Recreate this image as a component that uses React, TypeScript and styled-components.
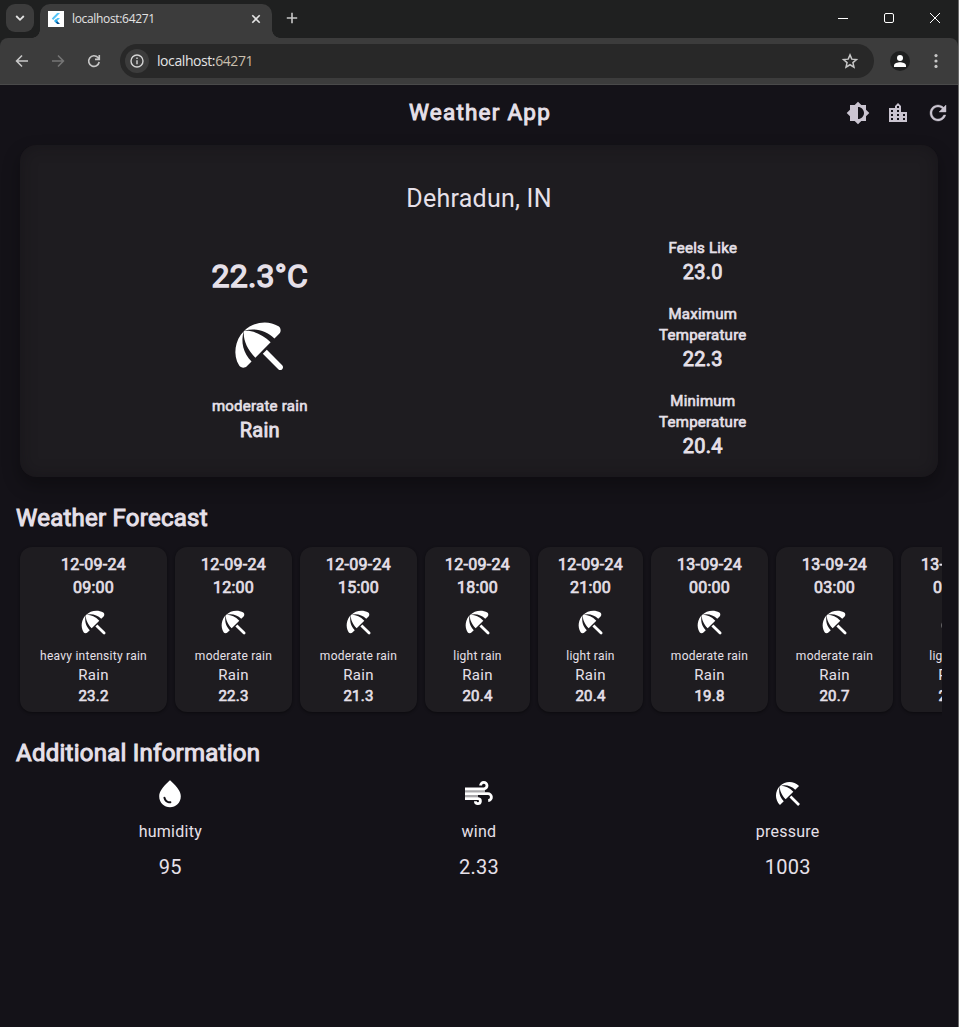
import React from "react";
import styled, { createGlobalStyle } from "styled-components";
import { MdBrightness6, MdLocationCity, MdBeachAccess } from "react-icons/md";

const Global = createGlobalStyle`
  * { box-sizing: border-box; }
  html, body { margin: 0; padding: 0; background: #141218; }
  body { overflow: hidden; }
`;

const Window = styled.div`
  width: 959px;
  height: 1027px;
  display: flex;
  flex-direction: column;
  overflow: hidden;
  background: #141218;
  border-right: 1px solid #6b6b6b;
  color: #e6e0e9;
  font-family: Roboto, sans-serif;
  letter-spacing: 0.25px;
`;

/* Browser chrome */
const TabStrip = styled.div`
  height: 38px;
  flex: none;
  display: flex;
  background: #1f2020;
  font-family: "Open Sans", sans-serif;
`;
const TabSearch = styled.div`
  width: 28px;
  height: 28px;
  margin: 4px 6px 0 6px;
  border-radius: 9px;
  background: #3c3c3c;
  display: grid;
  place-items: center;
`;
const Tab = styled.div`
  position: relative;
  width: 232px;
  height: 34px;
  margin-top: 4px;
  padding: 0 10px 5px 8px;
  display: flex;
  align-items: center;
  background: #3c3c3c;
  border-radius: 10px 10px 0 0;
  &::before,
  &::after {
    content: "";
    position: absolute;
    bottom: 0;
    width: 8px;
    height: 8px;
  }
  &::before {
    left: -8px;
    background: radial-gradient(circle at 0 0, #1f2020 7.5px, #3c3c3c 8px);
  }
  &::after {
    right: -8px;
    background: radial-gradient(circle at 100% 0, #1f2020 7.5px, #3c3c3c 8px);
  }
`;
const TabTitle = styled.span`
  flex: 1;
  margin-left: 8px;
  font-size: 12px;
  letter-spacing: -0.33px;
  color: #e3e3e3;
`;
const NewTab = styled.div`
  width: 40px;
  height: 36px;
  display: grid;
  place-items: center;
`;
const WindowButtons = styled.div`
  margin-left: auto;
  display: flex;
  height: 36px;
`;
const WindowButton = styled.div`
  width: 46px;
  display: grid;
  place-items: center;
`;
const ToolbarWrap = styled.div`
  background: #1f2020;
  height: 47px;
  flex: none;
`;
const Toolbar = styled.div`
  height: 47px;
  display: flex;
  align-items: center;
  padding: 0 4px 1px;
  background: #3c3c3c;
  border-bottom: 1px solid #4a4a4a;
  border-radius: 8px 8px 0 0;
`;
const ToolButton = styled.div`
  width: 36px;
  height: 36px;
  display: grid;
  place-items: center;
`;
const AddressBar = styled.div`
  flex: 1;
  height: 34px;
  margin: 0 8px;
  padding: 0 15px 0 5px;
  display: flex;
  align-items: center;
  background: #282828;
  border-radius: 17px;
`;
const SiteInfo = styled.div`
  width: 24px;
  height: 24px;
  border-radius: 12px;
  background: #3c3c3c;
  display: grid;
  place-items: center;
`;
const Url = styled.span`
  flex: 1;
  margin-left: 8px;
  font: 14px "Open Sans", sans-serif;
  letter-spacing: -0.42px;
  color: #e3e3e3;
`;
const Port = styled.span`
  color: #cabfac;
`;
const Avatar = styled.div`
  width: 20px;
  height: 20px;
  border-radius: 10px;
  background: #1f2020;
`;

/* App */
type TextProps = { $size: number; $line?: number; $ls?: number; $top?: number };
const Plain = styled.div<TextProps>`
  margin-top: ${(p) => p.$top ?? 0}px;
  font-size: ${(p) => p.$size}px;
  line-height: ${(p) => p.$line ?? p.$size * 1.43}px;
  letter-spacing: ${(p) => p.$ls ?? 0.25}px;
  white-space: nowrap;
`;
const Bold = styled(Plain)`
  -webkit-text-stroke: ${(p) => p.$size * 0.042}px currentColor;
`;
const AppBar = styled.header`
  height: 56px;
  flex: none;
  display: grid;
  grid-template-columns: 1fr auto 1fr;
  align-items: center;
`;
const Actions = styled.div`
  grid-column: 3;
  display: flex;
  justify-content: flex-end;
  color: #cac4d0;
`;
const Action = styled.div`
  width: 40px;
  height: 40px;
  display: grid;
  place-items: center;
`;
const Title = styled(Bold)`
  grid-column: 2;
  padding: 0 0 1px 2px;
`;
const CurrentCard = styled.section`
  height: 332px;
  flex: none;
  margin: 4px 20px 0;
  padding: 35.5px 16px 0;
  border-radius: 16px;
  background: #1e1c20;
  box-shadow: inset 0 0 16px rgba(15, 13, 18, 0.4), 0 8px 16px 2px rgba(0, 0, 0, 0.26);
  text-align: center;
`;
const CurrentBody = styled.div`
  display: flex;
  justify-content: space-around;
  margin-top: 22px;
`;
const Summary = styled.div`
  display: flex;
  flex-direction: column;
  align-items: center;
  padding-top: 16px;
`;
const Stats = styled.div`
  display: flex;
  flex-direction: column;
  gap: 18px;
`;
const IconSlot = styled.div<{ $top: number; $bottom: number }>`
  display: flex;
  justify-content: center;
  color: #fff;
  margin: ${(p) => p.$top}px 0 ${(p) => p.$bottom}px;
`;
const Heading = styled(Bold)`
  margin-left: 16px;
  flex: none;
`;
const ForecastRow = styled.div`
  display: flex;
  gap: 8px;
  margin: 10px 16px 0;
  padding: 2px 4px 5px;
  flex: none;
  overflow: hidden;
`;
const ForecastCard = styled.article<{ $width: number }>`
  flex: none;
  width: ${(p) => p.$width}px;
  height: 165px;
  padding-top: 6px;
  border-radius: 12px;
  background: #1e1c20;
  box-shadow: 0 1px 3px rgba(0, 0, 0, 0.45);
  text-align: center;
`;
const InfoRow = styled.div`
  display: grid;
  grid-template-columns: repeat(3, 1fr);
  margin: 0 16px;
  text-align: center;
`;

const Umbrella = ({ size }: { size: number }) => (
  <svg width={size} height={size} viewBox="0 0 24 24" fill="currentColor">
    <path d="M13.05 14.55l1.5-1.5 5.78 5.78c.41.41.41 1.06 0 1.47-.42.42-1.07.42-1.48 0z" />
    <path d="M17.42 8.83l1.78-1.78c.8-.8.7-2.2-.25-2.85C14.9 1.7 9.4 2.6 6.05 5.92c3.9-1.25 8.24-.22 11.37 2.91z" />
    <path d="M8.83 17.42L7.05 19.2c-.8.8-2.2.7-2.85-.25C1.7 14.9 2.6 9.4 5.92 6.05c-1.25 3.9-.22 8.24 2.91 11.37z" />
    <path d="M5.97 5.96l-.01.01c-.38 3.01 1.17 6.88 4.3 10.02l5.73-5.73c-3.13-3.13-7.01-4.68-10.02-4.3z" />
  </svg>
);

const Refresh = () => (
  <svg width="24" height="24" viewBox="0 0 24 24" fill="currentColor" stroke="currentColor" strokeWidth="0.4">
    <path d="M17.65 6.35C16.2 4.9 14.21 4 12 4c-4.42 0-7.99 3.58-7.99 8s3.57 8 7.99 8c3.73 0 6.84-2.55 7.73-6h-2.08c-.82 2.33-3.04 4-5.65 4-3.31 0-6-2.69-6-6s2.69-6 6-6c1.66 0 3.14.69 4.22 1.78L13 11h7V4l-2.35 2.35z" />
  </svg>
);

const Drop = () => (
  <svg width="32" height="32" viewBox="0 0 24 24" fill="currentColor" fillRule="evenodd">
    <path d="M12.66 2.3c-.38-.45-.95-.45-1.33 0C6.45 6.78 3.9 10.5 3.9 13.7 3.9 18.7 7.8 22 12 22s8.1-3.3 8.1-8.3c0-3.2-2.55-6.92-7.44-11.4zM7.83 14c.37 0 .67.26.74.62.41 2.22 2.28 2.98 3.64 2.87.43-.02.79.32.79.75 0 .4-.32.73-.72.75-2.13.13-4.62-1.09-5.19-4.12a.75.75 0 0 1 .74-.87z" />
  </svg>
);

const Wind = () => (
  <svg width="32" height="32" viewBox="0 0 32 32" fill="none" stroke="#fff" strokeWidth="2.8">
    <path d="M2 13h20M2 18.2h13" stroke="#a9a8ab" strokeWidth="3" />
    <path d="M2 10.8h19a3.2 3.2 0 1 0-3.4-3.2" />
    <path d="M2 15.7h22.6a3.4 3.4 0 0 1 .6 7" />
    <path d="M2 20.7h13.2a2.5 2.5 0 1 1-2.8 2.5" />
  </svg>
);

const FlutterLogo = () => (
  <svg width="16" height="16" viewBox="0 0 16 16">
    <rect width="16" height="16" fill="#fff" />
    <path d="M9.2 2H12L5.2 9 3.8 7.5z" fill="#54c5f8" />
    <path d="M9.2 7H12L9.2 10 6.5 10z" fill="#54c5f8" />
    <path d="M6.3 10l1.5-1.5L12 13H9.2z" fill="#01579b" />
    <path d="M6.3 10l1.5-1.5L9.3 10 7.8 11.5z" fill="#29b6f6" />
  </svg>
);

type Forecast = { date: string; time: string; detail: string; temp: string; width: number };
const forecasts: Forecast[] = [
  { date: "12-09-24", time: "09:00", detail: "heavy intensity rain", temp: "23.2", width: 147 },
  { date: "12-09-24", time: "12:00", detail: "moderate rain", temp: "22.3", width: 117 },
  { date: "12-09-24", time: "15:00", detail: "moderate rain", temp: "21.3", width: 117 },
  { date: "12-09-24", time: "18:00", detail: "light rain", temp: "20.4", width: 105 },
  { date: "12-09-24", time: "21:00", detail: "light rain", temp: "20.4", width: 105 },
  { date: "13-09-24", time: "00:00", detail: "moderate rain", temp: "19.8", width: 117 },
  { date: "13-09-24", time: "03:00", detail: "moderate rain", temp: "20.7", width: 117 },
  { date: "13-09-24", time: "06:00", detail: "light rain", temp: "21.6", width: 105 },
];

const Stat = ({ label, value }: { label: string[]; value: string }) => (
  <div>
    {label.map((l) => (
      <Bold key={l} $size={15} $line={21}>{l}</Bold>
    ))}
    <Bold $size={20} $line={27}>{value}</Bold>
  </div>
);

const Info = ({ icon, label, value }: { icon: React.ReactNode; label: string; value: string }) => (
  <div>
    <IconSlot $top={8} $bottom={10}>{icon}</IconSlot>
    <Plain $size={16} $line={23}>{label}</Plain>
    <Plain $size={20} $line={28} $top={10}>{value}</Plain>
  </div>
);

export default function App() {
  return (
    <Window>
      <Global />
      <TabStrip>
        <TabSearch>
          <svg width="10" height="8" viewBox="0 0 10 8" fill="none" stroke="#e3e3e3" strokeWidth="1.8"><path d="M1.2 2L5 5.8 8.8 2" /></svg>
        </TabSearch>
        <Tab>
          <FlutterLogo />
          <TabTitle>localhost:64271</TabTitle>
          <svg width="12" height="12" viewBox="0 0 12 12" stroke="#e3e3e3" strokeWidth="1.6"><path d="M2.3 2.3l7.4 7.4M9.7 2.3L2.3 9.7" /></svg>
        </Tab>
        <NewTab>
          <svg width="12" height="12" viewBox="0 0 12 12" stroke="#c7c7c7" strokeWidth="1.6"><path d="M6 .8v10.4M.8 6h10.4" /></svg>
        </NewTab>
        <WindowButtons>
          <WindowButton><svg width="10" height="10" stroke="#fff"><path d="M0 5.5h10" /></svg></WindowButton>
          <WindowButton><svg width="10" height="10" stroke="#fff" fill="none"><rect x=".5" y=".5" width="9" height="9" rx="1.5" /></svg></WindowButton>
          <WindowButton><svg width="10" height="10" stroke="#fff"><path d="M0 0l10 10M10 0L0 10" /></svg></WindowButton>
        </WindowButtons>
      </TabStrip>
      <ToolbarWrap>
        <Toolbar>
          <ToolButton>
            <svg width="16" height="16" viewBox="0 0 16 16" fill="none" stroke="#c7c7c7" strokeWidth="1.6"><path d="M14 8H3M8 2.5L2.6 8 8 13.5" /></svg>
          </ToolButton>
          <ToolButton>
            <svg width="16" height="16" viewBox="0 0 16 16" fill="none" stroke="#757575" strokeWidth="1.6"><path d="M2 8h11M8 2.5L13.4 8 8 13.5" /></svg>
          </ToolButton>
          <ToolButton>
            <svg width="16" height="16" viewBox="0 0 16 16" fill="none" stroke="#c7c7c7" strokeWidth="1.6"><path d="M13.2 9A5.3 5.3 0 1 1 12 4.6L13.2 6M13.3 2v4.4H9" /></svg>
          </ToolButton>
          <AddressBar>
            <SiteInfo>
              <svg width="14" height="14" viewBox="0 0 14 14" fill="none" stroke="#d5d5d5" strokeWidth="1.4"><circle cx="7" cy="7" r="6" /><path d="M7 6.3v4M7 3.6v1.5" /></svg>
            </SiteInfo>
            <Url>localhost:<Port>64271</Port></Url>
            <svg width="18" height="18" viewBox="0 0 24 24" fill="none" stroke="#c7c7c7" strokeWidth="2"><path d="M12 3.8l2.4 5.7 6.2.5-4.7 4.1 1.4 6.1L12 17l-5.3 3.2 1.4-6.1L3.4 10l6.2-.5z" /></svg>
          </AddressBar>
          <ToolButton>
            <Avatar>
              <svg width="20" height="20" viewBox="0 0 20 20" fill="#fff"><circle cx="10" cy="7" r="3" /><path d="M4 16v-1.6c0-2 3.6-3.1 6-3.1s6 1.1 6 3.1V16z" /></svg>
            </Avatar>
          </ToolButton>
          <ToolButton>
            <svg width="4" height="16" viewBox="0 0 4 16" fill="#c7c7c7"><circle cx="2" cy="2.6" r="1.6" /><circle cx="2" cy="8" r="1.6" /><circle cx="2" cy="13.4" r="1.6" /></svg>
          </ToolButton>
        </Toolbar>
      </ToolbarWrap>

      <AppBar>
        <Title $size={22.5} $ls={1.22}>Weather App</Title>
        <Actions>
          <Action><MdBrightness6 size={24} /></Action>
          <Action><MdLocationCity size={24} /></Action>
          <Action><Refresh /></Action>
        </Actions>
      </AppBar>

      <CurrentCard>
        <Plain $size={25}>Dehradun, IN</Plain>
        <CurrentBody>
          <Summary>
            <Bold $size={32}>22.3°C</Bold>
            <IconSlot $top={15} $bottom={17}><Umbrella size={64} /></IconSlot>
            <Bold $size={15} $line={21}>moderate rain</Bold>
            <Bold $size={20} $line={27}>Rain</Bold>
          </Summary>
          <Stats>
            <Stat label={["Feels Like"]} value="23.0" />
            <Stat label={["Maximum", "Temperature"]} value="22.3" />
            <Stat label={["Minimum", "Temperature"]} value="20.4" />
          </Stats>
        </CurrentBody>
      </CurrentCard>

      <Heading $size={24} $line={34} $top={24}>Weather Forecast</Heading>
      <ForecastRow>
        {forecasts.map((f) => (
          <ForecastCard key={f.date + f.time} $width={f.width}>
            <Bold $size={16} $line={23}>{f.date}</Bold>
            <Bold $size={16} $line={23}>{f.time}</Bold>
            <IconSlot $top={8} $bottom={8}><Umbrella size={32} /></IconSlot>
            <Plain $size={12} $line={18}>{f.detail}</Plain>
            <Plain $size={15} $line={21}>Rain</Plain>
            <Bold $size={15} $line={21}>{f.temp}</Bold>
          </ForecastCard>
        ))}
      </ForecastRow>
      <Heading $size={24} $line={34} $top={19}>Additional Information</Heading>
      <InfoRow>
        <Info icon={<Drop />} label="humidity" value="95" />
        <Info icon={<Wind />} label="wind" value="2.33" />
        <Info icon={<MdBeachAccess size={32} />} label="pressure" value="1003" />
      </InfoRow>
    </Window>
  );
}
